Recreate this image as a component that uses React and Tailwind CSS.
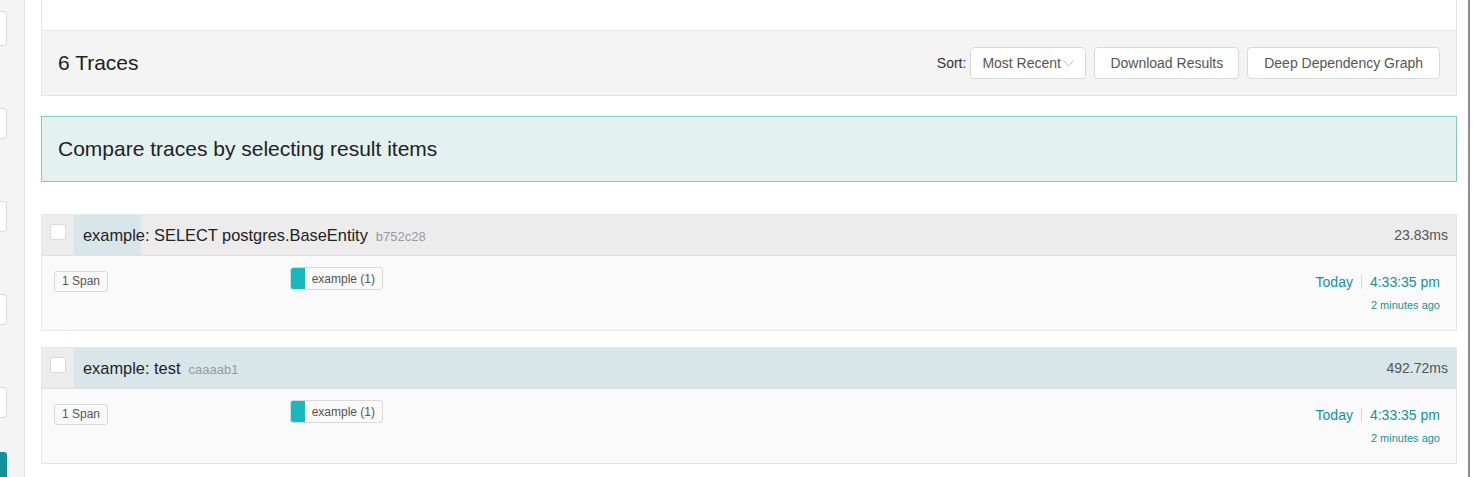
import React from "react";

const traces = [
    { name: "example: SELECT postgres.BaseEntity", id: "b752c28", duration: "23.83ms", pct: 4.84 },
    { name: "example: test", id: "caaaab1", duration: "492.72ms", pct: 100 },
];

function SideInput({ className }) {
    return <div className={`shrink-0 w-[7px] bg-white border border-l-0 border-[#d9d9d9] rounded-r-[4px] ${className}`} />;
}

function TraceItem({ trace, className }) {
    return (
        <div className={`border border-[#e6e6e6] ${className}`}>
            <div className="flex h-[41px] bg-[#ececec] border-b border-[#e0e0e0]">
                <div className="w-[32px] shrink-0 flex justify-center pt-[9px]">
                    <div className="w-[16px] h-[16px] bg-white border border-[#d9d9d9] rounded-[2px]" />
                </div>
                <div className="relative flex-1 flex items-center justify-between pl-[9px] pr-[8px]">
                    <div className="absolute left-0 top-0 bottom-0 bg-[#d8e6ea]" style={{ width: `${trace.pct}%` }} />
                    <div className="relative flex items-baseline">
                        <span className="text-[16.4px] text-[#222]">{trace.name}</span>
                        <span className="ml-[8px] text-[13px] text-[#999]">{trace.id}</span>
                    </div>
                    <span className="relative text-[14px] text-[#555]">{trace.duration}</span>
                </div>
            </div>
            <div className="grid grid-cols-6 h-[74px] bg-[#fafafa]">
                <div className="col-span-1 px-[12px] pt-[12px]">
                    <span className="inline-flex items-center h-[21px] px-[7px] border border-[#d9d9d9] rounded-[3px] text-[12px] text-[#555]">1 Span</span>
                </div>
                <div className="col-span-4 px-[12px] pt-[11px]">
                    <span className="inline-flex items-stretch h-[23px] border border-[#d9d9d9] rounded-[3px] overflow-hidden text-[12px] text-[#555]">
                        <span className="w-[15px] bg-[#17b8be] -ml-px -my-px" />
                        <span className="flex items-center pl-[7px] pr-[7px]">example (1)</span>
                    </span>
                </div>
                <div className="col-span-1 pr-[16px] pt-[16px] text-right text-[#11939a]">
                    <div className="flex justify-end items-center leading-[20px] text-[14px]">
                        <span>Today</span>
                        <span className="mx-[8px] w-px h-[14px] bg-[#d6d6d6]" />
                        <span>4:33:35 pm</span>
                    </div>
                    <div className="mt-[5px] leading-[16px] text-[11px]">2 minutes ago</div>
                </div>
            </div>
        </div>
    );
}

export default function App() {
    return (
        <div className="flex w-[1473px] h-[477px] overflow-hidden bg-white font-['Liberation_Sans',Arial,sans-serif]">
            <aside className="w-[25px] shrink-0 bg-[#f4f4f4] border-r border-[#e3e3e3] flex flex-col">
                <SideInput className="mt-[11px] h-[35px]" />
                <SideInput className="mt-[62px] h-[31px]" />
                <SideInput className="mt-[62px] h-[31px]" />
                <SideInput className="mt-[62px] h-[31px]" />
                <SideInput className="mt-[62px] h-[31px]" />
                <div className="shrink-0 mt-[34px] w-[7px] h-[40px] bg-[#11939a] rounded-tr-[3px]" />
            </aside>

            <main className="flex-1 pl-[16px] pr-[11px]">
                <div className="border-x border-b border-[#e6e6e6]">
                    <div className="h-[31px] bg-white border-b border-[#e6e6e6]" />
                    <div className="h-[64px] bg-[#f4f4f4] flex items-center justify-between pl-[16px] pr-[16px]">
                        <h2 className="text-[21px] text-[#222]">6 Traces</h2>
                        <div className="flex items-center text-[14px]">
                            <span className="text-[#333] mr-[4px]">Sort:</span>
                            <div className="flex items-center h-[32px] w-[116px] pl-[11px] bg-white border border-[#d9d9d9] rounded-[4px] text-[#555]">
                                <span>Most Recent</span>
                                <svg width="11" height="7" viewBox="0 0 11 7" className="ml-[2px]">
                                    <path d="M0.5 0.5 L5.5 5.8 L10.5 0.5" fill="none" stroke="#bbb" strokeWidth="1" />
                                </svg>
                            </div>
                            <button className="ml-[8px] h-[32px] px-[15px] bg-white border border-[#d9d9d9] rounded-[4px] text-[#555]">Download Results</button>
                            <button className="ml-[8px] h-[32px] px-[16px] bg-white border border-[#d9d9d9] rounded-[4px] text-[#555]">Deep Dependency Graph</button>
                        </div>
                    </div>
                </div>

                <div className="mt-[20px] h-[66px] flex items-center px-[16px] bg-[#e3f1f1] border border-[#86c8c6] text-[21px] text-[#222]">
                    Compare traces by selecting result items
                </div>

                <TraceItem trace={traces[0]} className="mt-[32px]" />
                <TraceItem trace={traces[1]} className="mt-[16px]" />
            </main>

            <div className="w-[2px] shrink-0 bg-[#8c8c8c]" />
            <div className="w-[3px] shrink-0 bg-white" />
        </div>
    );
}
